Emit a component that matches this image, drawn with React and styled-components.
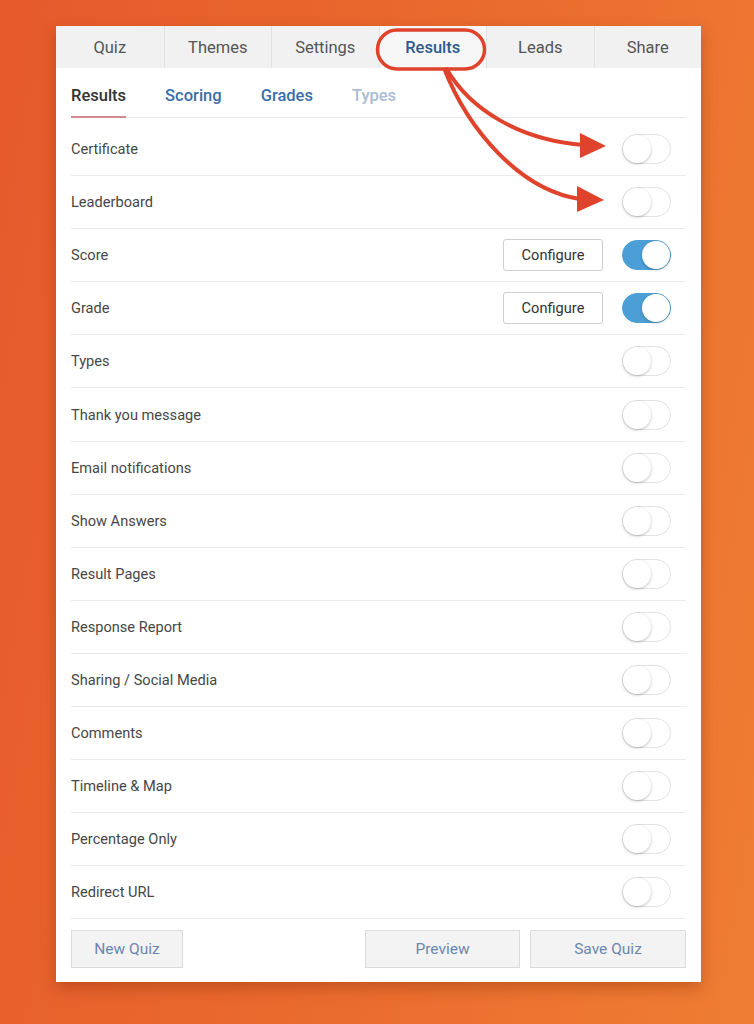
import React from "react";
import styled, { createGlobalStyle } from "styled-components";

const GlobalStyle = createGlobalStyle`
  html, body {
    margin: 0;
    padding: 0;
  }
  body {
    width: 754px;
    height: 1024px;
    overflow: hidden;
    background: linear-gradient(100deg, #e65a2b 0%, #ea6a2e 50%, #ef7d33 100%);
    font-family: Roboto, "Noto Sans", Arial, sans-serif;
  }
`;

const topTabs = ["Quiz", "Themes", "Settings", "Results", "Leads", "Share"];
const subTabs = [
  { label: "Results", state: "active" },
  { label: "Scoring", state: "link" },
  { label: "Grades", state: "link" },
  { label: "Types", state: "muted" },
];
const rows = [
  { label: "Certificate" },
  { label: "Leaderboard" },
  { label: "Score", on: true, configure: true },
  { label: "Grade", on: true, configure: true },
  { label: "Types" },
  { label: "Thank you message" },
  { label: "Email notifications" },
  { label: "Show Answers" },
  { label: "Result Pages" },
  { label: "Response Report" },
  { label: "Sharing / Social Media" },
  { label: "Comments" },
  { label: "Timeline & Map" },
  { label: "Percentage Only" },
  { label: "Redirect URL" },
];

export default function App() {
  return (
    <Page>
      <GlobalStyle />
      <Panel>
        <TopBar>
          {topTabs.map((t) => (
            <TopTab key={t} $active={t === "Results"}>{t}</TopTab>
          ))}
        </TopBar>

        <Body>
          <SubBar>
            {subTabs.map((s) => (
              <SubTab key={s.label} $state={s.state}>{s.label}</SubTab>
            ))}
          </SubBar>

          <List>
            {rows.map((r) => (
              <Row key={r.label}>
                <RowLabel>{r.label}</RowLabel>
                <RowRight>
                  {r.configure && <ConfigureButton>Configure</ConfigureButton>}
                  <Toggle $on={r.on}>
                    <Knob $on={r.on} />
                  </Toggle>
                </RowRight>
              </Row>
            ))}
          </List>

          <Footer>
            <FooterButton $w={112}>New Quiz</FooterButton>
            <FooterRight>
              <FooterButton $w={155}>Preview</FooterButton>
              <FooterButton $w={156}>Save Quiz</FooterButton>
            </FooterRight>
          </Footer>
        </Body>
      </Panel>

      {/* annotation drawn over the screenshot */}
      <Annotation width="754" height="1024" viewBox="0 0 754 1024">
        <rect x="377.5" y="30" width="107" height="39" rx="19.5" fill="none" stroke="#e0432b" strokeWidth="3.5" />
        <path d="M446 68 C 470 110, 520 140, 584 145" fill="none" stroke="#e0432b" strokeWidth="4" />
        <path d="M580 133 L606 146 L580 158 Z" fill="#e0432b" />
        <path d="M444 68 C 468 130, 520 190, 580 199" fill="none" stroke="#e0432b" strokeWidth="4" />
        <path d="M577 186 L604 200 L577 212 Z" fill="#e0432b" />
      </Annotation>
    </Page>
  );
}

const Page = styled.div`
  position: relative;
  width: 754px;
  height: 1024px;
  padding: 26px 0 0 56px;
  box-sizing: border-box;
`;

const Panel = styled.div`
  width: 645px;
  height: 956px;
  background: #fff;
  box-shadow: 0 6px 14px rgba(120, 40, 0, 0.35);
  display: flex;
  flex-direction: column;
`;

const TopBar = styled.div`
  display: grid;
  grid-template-columns: repeat(6, 1fr);
  height: 42px;
  background: #f1f1f1;
`;

const TopTab = styled.div`
  display: flex;
  align-items: center;
  justify-content: center;
  font-size: 16.5px;
  color: ${(p) => (p.$active ? "#2f5b8e" : "#555")};
  font-weight: ${(p) => (p.$active ? 500 : 400)};
  background: ${(p) => (p.$active ? "#f7f7f7" : "transparent")};
  border-left: 1px solid #e2e2e2;
  &:first-child {
    border-left: none;
  }
`;

const Body = styled.div`
  flex: 1;
  display: flex;
  flex-direction: column;
  padding: 0 15px;
`;

const SubBar = styled.div`
  display: flex;
  height: 49px;
  border-bottom: 1px solid #e8e8e8;
`;

const SubTab = styled.div`
  display: flex;
  align-items: center;
  padding-top: 6px;
  margin-right: 39px;
  font-size: 16.5px;
  font-weight: 500;
  box-sizing: border-box;
  color: ${(p) =>
    p.$state === "active" ? "#333" : p.$state === "link" ? "#3a6ea8" : "#a9bcd3"};
  border-bottom: 2px solid ${(p) => (p.$state === "active" ? "#d08b90" : "transparent")};
  margin-bottom: -1px;
`;

const List = styled.div`
  margin-top: 5px;
  display: flex;
  flex-direction: column;
`;

const Row = styled.div`
  display: flex;
  align-items: center;
  justify-content: space-between;
  height: 53.1px;
  box-sizing: border-box;
  border-bottom: 1px solid #ebebeb;
  padding-right: 15px;
`;

const RowLabel = styled.span`
  font-size: 14.6px;
  color: #474747;
`;

const RowRight = styled.div`
  display: flex;
  align-items: center;
  gap: 19px;
`;

const ConfigureButton = styled.div`
  width: 100px;
  height: 32px;
  box-sizing: border-box;
  border: 1px solid #cfcfcf;
  border-radius: 3px;
  display: flex;
  align-items: center;
  justify-content: center;
  font-size: 14.6px;
  color: #333;
  background: #fff;
`;

const Toggle = styled.div`
  position: relative;
  width: 49px;
  height: 30px;
  box-sizing: border-box;
  border-radius: 15px;
  background: ${(p) => (p.$on ? "#4b9fd6" : "#fff")};
  border: 1px solid ${(p) => (p.$on ? "#4b9fd6" : "#e2e2e2")};
`;

const Knob = styled.div`
  position: absolute;
  top: 0;
  left: ${(p) => (p.$on ? "19px" : "0")};
  width: 28px;
  height: 28px;
  border-radius: 50%;
  background: #fff;
  box-shadow: 0 1px 3px rgba(0, 0, 0, 0.25);
`;

const Footer = styled.div`
  display: flex;
  justify-content: space-between;
  padding-top: 11px;
`;

const FooterRight = styled.div`
  display: flex;
  gap: 10px;
`;

const FooterButton = styled.div`
  width: ${(p) => p.$w}px;
  height: 38px;
  box-sizing: border-box;
  background: #f3f3f3;
  border: 1px solid #dcdcdc;
  display: flex;
  align-items: center;
  justify-content: center;
  font-size: 15.5px;
  color: #6a88ad;
`;

const Annotation = styled.svg`
  position: absolute;
  top: 0;
  left: 0;
  pointer-events: none;
`;
